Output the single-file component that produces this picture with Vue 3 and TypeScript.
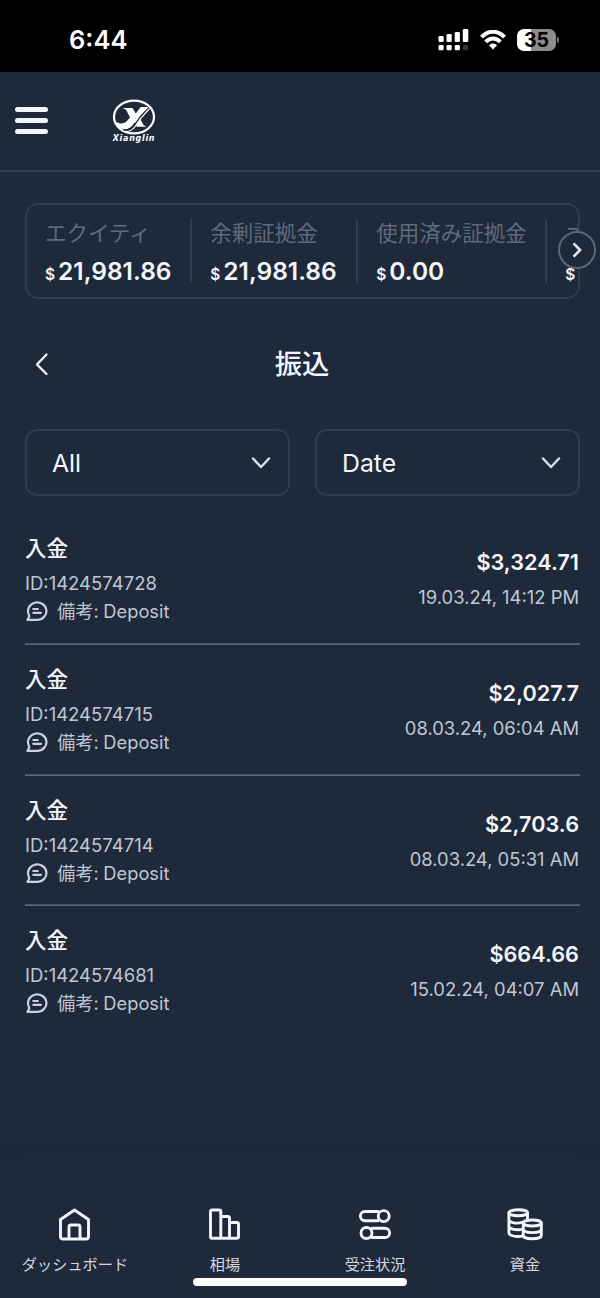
<script setup lang="ts">
interface Metric { label: string; value: string; width: number }
interface Transfer { id: string; amount: string; date: string }

const metrics: Metric[] = [
  { label: 'エクイティ', value: '21,981.86', width: 166 },
  { label: '余剰証拠金', value: '21,981.86', width: 166 },
  { label: '使用済み証拠金', value: '0.00', width: 189 },
  { label: 'オ', value: '', width: 50 },
]
const filters: string[] = ['All', 'Date']
const transfers: Transfer[] = [
  { id: '1424574728', amount: '$3,324.71', date: '19.03.24, 14:12 PM' },
  { id: '1424574715', amount: '$2,027.7', date: '08.03.24, 06:04 AM' },
  { id: '1424574714', amount: '$2,703.6', date: '08.03.24, 05:31 AM' },
  { id: '1424574681', amount: '$664.66', date: '15.02.24, 04:07 AM' },
]
</script>

<template>
  <div class="screen">
    <div class="status">
      <span class="time">6:44</span>
      <div class="indicators">
        <svg class="signal" width="31" height="22" viewBox="0 0 31 22" fill="#fff">
          <rect x="0.500" y="7" width="5.200" height="6" rx="1.3" />
          <rect x="8.500" y="5" width="5.200" height="8" rx="1.3" />
          <rect x="16.700" y="3" width="5.200" height="10" rx="1.3" />
          <rect x="24.800" y="0" width="5.500" height="13" rx="1.3" />
          <rect x="0.500" y="16" width="5.200" height="5.200" rx="1.3" />
          <rect x="8.500" y="16" width="5.200" height="5.200" rx="1.3" />
          <rect x="16.700" y="16" width="5.200" height="5.200" rx="1.3" />
          <rect x="24.800" y="16" width="5.200" height="5.200" rx="1.3" fill="#333" />
        </svg>
        <svg class="wifi" width="26" height="20" viewBox="0 0 26 20" fill="none" stroke="#fff" stroke-width="4">
          <path d="M1.500 7.200C8-.1 18-.1 24.500 7.200" />
          <path d="M5.700 11.900c4.300-4.500 10.300-4.500 14.600 0" />
          <path d="M9 15.300c2.500-2.300 5.500-2.300 8 0L13 19.500z" fill="#fff" stroke="none" />
        </svg>
        <div class="battery"><span>35</span></div>
        <i class="battery-cap"></i>
      </div>
    </div>

    <header class="header">
      <div class="burger"><i></i><i></i><i></i></div>
      <div class="brand">
        <svg width="42" height="36" viewBox="0 0 42 36">
          <ellipse cx="21" cy="18" rx="20" ry="16.300" fill="none" stroke="#fff" stroke-width="2.200" />
          <path fill="#fff" d="M9.500 9h10l3.200 5.500 5-6.500h8.500L24.500 19.500 19 27c-2.500 3-6.500 4-10.500 2.500C5 28 4 25 3 22.500c4 3 8 2.500 11-.5l3-3.500-3.500-7q-1-1.800-4-2.500z" />
          <path fill="#fff" d="M26 16.500l3 7q1.500 3.500 4.200 4.300h-9.500l-2.700-5.300z" />
          <path fill="none" stroke="#1e2939" stroke-width="1.300" d="M36 8.500L27 18.500 21.500 26c-2.800 4-6.500 5.500-11 5" />
          <path fill="none" stroke="#fff" stroke-width="1.200" d="M36.500 9.500L28 19.200 22.500 27c-2.400 3.600-5.800 5.500-9.500 5.500" />
        </svg>
        <span>Xianglin</span>
      </div>
    </header>

    <section class="metrics-wrap">
      <div class="metrics">
        <div v-for="m in metrics" :key="m.label" class="metric" :style="{ width: m.width + 'px' }">
          <div class="metric-label">{{ m.label }}</div>
          <div class="metric-value"><small>$</small>{{ m.value }}</div>
        </div>
      </div>
      <button class="next" type="button">
        <svg width="34" height="34" viewBox="0 0 34 34" fill="none" stroke="#e4e9f2" stroke-width="2.600"><path d="M13.500 10.300l6.600 6.700-6.600 6.700" /></svg>
      </button>
    </section>

    <div class="title-row">
      <svg width="14" height="24" viewBox="0 0 14 24" fill="none" stroke="#f1f5fb" stroke-width="2.300" stroke-linecap="round" stroke-linejoin="round"><path d="M11.500 2.500L2 12.500l9.500 9.500" /></svg>
      <h1>振込</h1>
    </div>

    <div class="filters">
      <div v-for="f in filters" :key="f" class="select">
        <span>{{ f }}</span>
        <svg width="20" height="12" viewBox="0 0 20 12" fill="none" stroke="#d5deed" stroke-width="2.500" stroke-linecap="round" stroke-linejoin="round"><path d="M2 1.500l8 8.500 8-8.500" /></svg>
      </div>
    </div>

    <main class="list">
      <article v-for="t in transfers" :key="t.id" class="row">
        <div class="left">
          <h2>入金</h2>
          <div class="ident">ID:{{ t.id }}</div>
          <div class="note">
            <svg width="22" height="20" viewBox="0 0 22 20" fill="none" stroke="#c9d2e1" stroke-width="2.200" stroke-linecap="round" stroke-linejoin="round">
              <path d="M2.700 13.400A9.200 8.700 0 1 1 11.800 18.800H1.400l1.900-3.300z" /><path d="M7.300 8h4.500M7.300 11.800h7.700" />
            </svg>
            <span class="note-label">備考:</span><span>Deposit</span>
          </div>
        </div>
        <div class="right">
          <div class="amount">{{ t.amount }}</div>
          <div class="date">{{ t.date }}</div>
        </div>
      </article>
    </main>

    <nav class="tabs">
      <div class="tab">
        <svg width="36" height="36" viewBox="0 0 36 36"><path d="M3.500 13.500L17.500 4l14 9.500V30.500q0 2.500-2.500 2.500H6q-2.500 0-2.500-2.500zM12 33V21q0-2 2-2h7q2 0 2 2v12" /></svg>
        <span>ダッシュボード</span>
      </div>
      <div class="tab">
        <svg width="36" height="36" viewBox="0 0 36 36"><path d="M3.500 31V5.500q0-1.500 1.500-1.500h7.300q1.500 0 1.500 1.500v26.500M13.800 10.500h7q1.700 0 1.700 1.700V32M22.500 16.500h7.300q1.700 0 1.700 1.700V30.500q0 1.800-1.800 1.800H5Q3.500 32.300 3.500 31" /></svg>
        <span>相場</span>
      </div>
      <div class="tab">
        <svg width="36" height="36" viewBox="0 0 36 36"><path d="M21 5.500H8a4.600 4.600 0 0 0 0 9.200h13M15 22.300h13a4.600 4.600 0 0 1 0 9.200H15" /><circle cx="26.700" cy="10.100" r="5.500" /><circle cx="9.500" cy="27" r="5.500" /></svg>
        <span>受注状況</span>
      </div>
      <div class="tab">
        <svg width="36" height="36" viewBox="0 0 36 36"><ellipse cx="11.200" cy="6.800" rx="9.300" ry="3" /><path d="M1.900 7v19.800c0 2.200 4.500 3.800 9.300 3.700 2 0 3-.1 4.500-.6M20.500 7v6M1.900 13.500c0 3.500 8.500 4.500 14 2.700M1.900 20c0 3.200 8 4.600 13.500 3.200" /><ellipse cx="25.300" cy="17" rx="9" ry="3" /><path d="M16.300 17v12.500c0 4.400 18 4.400 18 0V17M16.300 23.300c0 4.400 18 4.400 18 0" /></svg>
        <span>資金</span>
      </div>
      <i class="home-bar"></i>
    </nav>
  </div>
</template>

<style>
body { background: #1e2939; }
</style>

<style scoped>
* { box-sizing: border-box; }
.screen { width: 600px; height: 1298px; background: #1e2939; color: #f2f6fc; font-family: Inter, "Noto Sans CJK JP", sans-serif; display: flex; flex-direction: column; overflow: hidden; }
.status { height: 72px; flex: none; background: #000; display: flex; justify-content: space-between; padding: 0 41px 0 69px; color: #fff; }
.time { font-size: 25.500px; font-weight: 600; line-height: 80px; }
.indicators { display: flex; align-items: flex-start; padding-top: 29px; }
.signal { margin-right: 1px; }
.wifi { margin: 1px 0 0 10px; }
.battery { width: 39px; height: 22px; margin-left: 11px; border-radius: 7px; background: linear-gradient(90deg, #fff 36%, #8c8c8c 36%); color: #000; font-size: 19.500px; font-weight: 700; line-height: 22px; text-align: center; }
.battery-cap { width: 2px; height: 6px; margin: 8px 0 0 1px; background: #777; border-radius: 0 3px 3px 0; }
.header { height: 100px; flex: none; display: flex; align-items: flex-start; border-bottom: 2px solid #323e4e; }
.burger { width: 33px; margin: 35px 0 0 15px; display: flex; flex-direction: column; gap: 6px; }
.burger i { height: 5px; border-radius: 3px; background: #f1f5fc; }
.brand { width: 46px; margin: 27px 0 0 63px; display: flex; flex-direction: column; align-items: center; }
.brand svg { display: block; flex: none; }
.brand span { color: #fff; font: italic bold 8px/8px "DejaVu Sans", sans-serif; letter-spacing: .7px; }
.metrics-wrap { position: relative; margin: 31px 20px 0 25px; height: 96px; flex: none; }
.metrics { height: 96px; border: 2px solid #2f3b4c; border-radius: 13px; display: flex; overflow: hidden; }
.metric { flex: none; height: 64px; margin-top: 14px; padding-left: 18.200px; border-right: 2px solid #313c4d; white-space: nowrap; }
.metric:first-child { margin-left: -1px; padding-left: 19px; }
.metric-label { font-size: 21.500px; line-height: 28px; color: #5e697e; }
.metric-value { font-size: 24.500px; font-weight: 600; line-height: 46px; margin-top: .5px; }
.metric-value small { font-size: 15.500px; font-weight: 600; margin-right: 3px; }
.next { position: absolute; right: -16px; top: 28px; width: 38px; height: 38px; padding: 0; border: 2px solid #5c6778; border-radius: 50%; background: #1e2939; }
.next svg { display: block; }
.title-row { height: 60px; margin-top: 35px; padding: 0 0 0 35px; flex: none; display: flex; align-items: center; }
.title-row h1 { flex: 1; margin: 0 45px 0 0; padding-top: 1px; text-align: center; font-size: 27.300px; font-weight: 500; line-height: 60px; }
.filters { height: 67px; margin: 35px 20px 0 25px; display: flex; gap: 25px; flex: none; }
.select { flex: 1; border: 2px solid #2f3b4c; border-radius: 12px; display: flex; align-items: center; justify-content: space-between; padding: 0 17px 0 25px; font-size: 24.800px; }
.list { margin: 18px 20px 0 25px; flex: 1; }
.row { height: 130.800px; padding: 20px 1px 0 0; display: flex; justify-content: space-between; }
.row + .row { box-shadow: 0 -1.700px 0 #5c6777; }
h2 { margin: 0; font-size: 21.500px; line-height: 28px; font-weight: 500; }
.ident { margin-top: 7px; font-size: 18.500px; line-height: 28px; color: #bfc7d6; }
.note { display: flex; align-items: center; font-size: 18.300px; line-height: 28px; color: #bfc7d6; }
.note svg { margin-left: .5px; }
.note-label { margin: 0 4.500px 0 9.500px; }
.right { text-align: right; padding-top: 14px; }
.amount { font-size: 21.700px; line-height: 28px; font-weight: 600; }
.date { margin-top: 7px; font-size: 18.400px; line-height: 28px; color: #bfc7d6; }
.tabs { position: relative; height: 115px; flex: none; display: flex; padding-top: 23px; box-shadow: 0 -10px 30px rgba(45, 58, 75, .25); }
.tab { flex: 1; display: flex; flex-direction: column; align-items: center; }
.tab svg { fill: none; stroke: #f1f5fc; stroke-width: 2.900; stroke-linejoin: round; stroke-linecap: round; }
.tab span { margin-top: 11px; font-size: 15.200px; line-height: 24px; color: #d4dae4; white-space: nowrap; }
.home-bar { position: absolute; left: 193px; bottom: 12px; width: 214px; height: 8px; border-radius: 4px; background: #fff; }
</style>
